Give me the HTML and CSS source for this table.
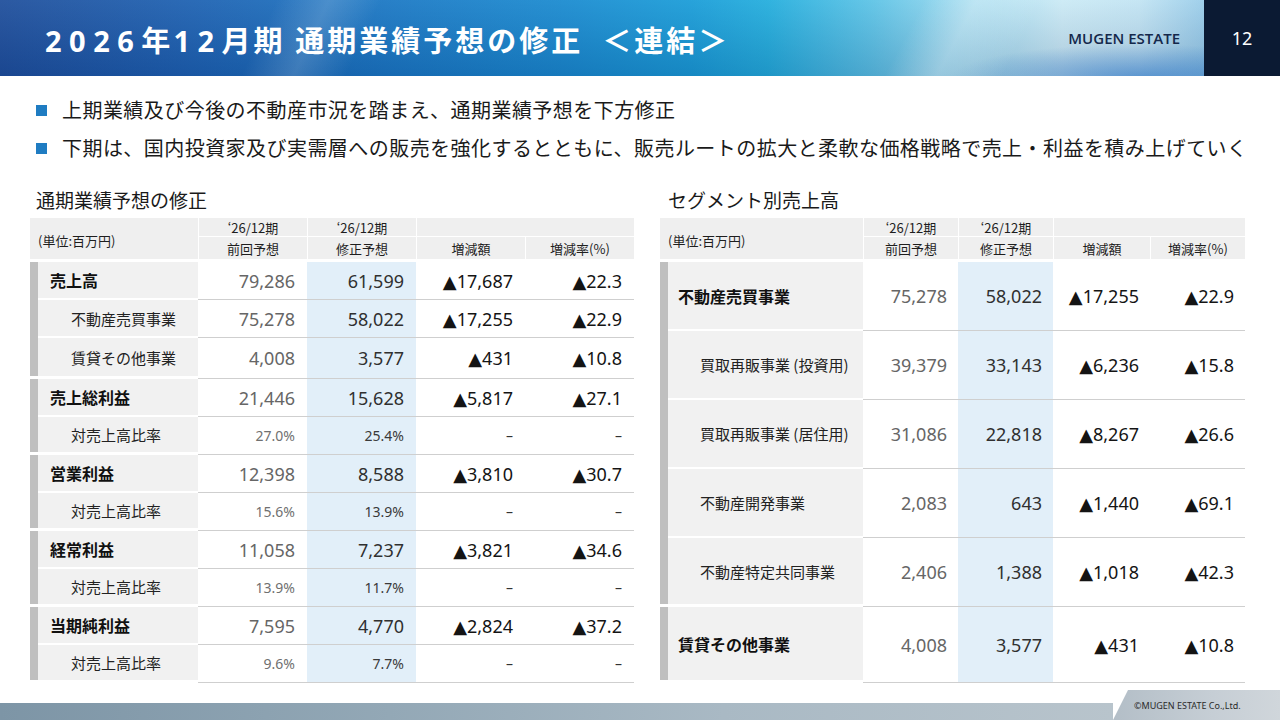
FILE: index.html
```html
<!DOCTYPE html>
<html lang="ja">
<head>
<meta charset="utf-8">
<title>2026年12月期 通期業績予想の修正</title>
<link rel="stylesheet" href="styles.css">
</head>
<body>
<div class="slide">
  <header class="hdr">
    <h1 class="title"><span class="d">2026</span>年<span class="d">12</span>月期 通期業績予想の修正&nbsp;&nbsp;＜連結＞</h1>
    <div class="logo">MUGEN ESTATE</div>
    <div class="pgno">12</div>
  </header>

  <ul class="bullets">
    <li>上期業績及び今後の不動産市況を踏まえ、通期業績予想を下方修正</li>
    <li>下期は、国内投資家及び実需層への販売を強化するとともに、販売ルートの拡大と柔軟な価格戦略で売上・利益を積み上げていく</li>
  </ul>

  <main class="tables">
    <section class="panel panel-left">
      <h2 class="sec">通期業績予想の修正</h2>
      <div class="thead tl">
        <div class="th unit">(単位:百万円)</div>
        <div class="th r1">‘26/12期</div>
        <div class="th r1">‘26/12期</div>
        <div class="th r1 blank"></div>
        <div class="th">前回予想</div>
        <div class="th">修正予想</div>
        <div class="th">増減額</div>
        <div class="th">増減率(%)</div>
      </div>
      <div class="tbody tl rows-l">
        <div class="lab">売上高</div>
        <div class="c n1">79,286</div><div class="c n2">61,599</div><div class="c n3">▲17,687</div><div class="c n4">▲22.3</div>

        <div class="lab sub">不動産売買事業</div>
        <div class="c n1">75,278</div><div class="c n2">58,022</div><div class="c n3">▲17,255</div><div class="c n4">▲22.9</div>

        <div class="lab sub end">賃貸その他事業</div>
        <div class="c n1">4,008</div><div class="c n2">3,577</div><div class="c n3">▲431</div><div class="c n4">▲10.8</div>

        <div class="lab">売上総利益</div>
        <div class="c n1">21,446</div><div class="c n2">15,628</div><div class="c n3">▲5,817</div><div class="c n4">▲27.1</div>

        <div class="lab sub end">対売上高比率</div>
        <div class="c n1 p">27.0%</div><div class="c n2 p">25.4%</div><div class="c n3 p">–</div><div class="c n4 p">–</div>

        <div class="lab">営業利益</div>
        <div class="c n1">12,398</div><div class="c n2">8,588</div><div class="c n3">▲3,810</div><div class="c n4">▲30.7</div>

        <div class="lab sub end">対売上高比率</div>
        <div class="c n1 p">15.6%</div><div class="c n2 p">13.9%</div><div class="c n3 p">–</div><div class="c n4 p">–</div>

        <div class="lab">経常利益</div>
        <div class="c n1">11,058</div><div class="c n2">7,237</div><div class="c n3">▲3,821</div><div class="c n4">▲34.6</div>

        <div class="lab sub end">対売上高比率</div>
        <div class="c n1 p">13.9%</div><div class="c n2 p">11.7%</div><div class="c n3 p">–</div><div class="c n4 p">–</div>

        <div class="lab">当期純利益</div>
        <div class="c n1">7,595</div><div class="c n2">4,770</div><div class="c n3">▲2,824</div><div class="c n4">▲37.2</div>

        <div class="lab sub end">対売上高比率</div>
        <div class="c n1 p">9.6%</div><div class="c n2 p">7.7%</div><div class="c n3 p">–</div><div class="c n4 p">–</div>
      </div>
    </section>

    <section class="panel panel-right">
      <h2 class="sec">セグメント別売上高</h2>
      <div class="thead tr">
        <div class="th unit">(単位:百万円)</div>
        <div class="th r1">‘26/12期</div>
        <div class="th r1">‘26/12期</div>
        <div class="th r1 blank"></div>
        <div class="th">前回予想</div>
        <div class="th">修正予想</div>
        <div class="th">増減額</div>
        <div class="th">増減率(%)</div>
      </div>
      <div class="tbody tr rows-r">
        <div class="lab">不動産売買事業</div>
        <div class="c n1">75,278</div><div class="c n2">58,022</div><div class="c n3">▲17,255</div><div class="c n4">▲22.9</div>

        <div class="lab sub">買取再販事業 (投資用)</div>
        <div class="c n1">39,379</div><div class="c n2">33,143</div><div class="c n3">▲6,236</div><div class="c n4">▲15.8</div>

        <div class="lab sub">買取再販事業 (居住用)</div>
        <div class="c n1">31,086</div><div class="c n2">22,818</div><div class="c n3">▲8,267</div><div class="c n4">▲26.6</div>

        <div class="lab sub">不動産開発事業</div>
        <div class="c n1">2,083</div><div class="c n2">643</div><div class="c n3">▲1,440</div><div class="c n4">▲69.1</div>

        <div class="lab sub end">不動産特定共同事業</div>
        <div class="c n1">2,406</div><div class="c n2">1,388</div><div class="c n3">▲1,018</div><div class="c n4">▲42.3</div>

        <div class="lab end">賃貸その他事業</div>
        <div class="c n1">4,008</div><div class="c n2">3,577</div><div class="c n3">▲431</div><div class="c n4">▲10.8</div>
      </div>
    </section>
  </main>

  <footer class="ftr">
    <div class="band"></div>
    <div class="tab">©MUGEN ESTATE Co.,Ltd.</div>
  </footer>
</div>
</body>
</html>
```

FILE: styles.css
```css
* {
  box-sizing: border-box;
  margin: 0;
  padding: 0;
}

body {
  margin: 0;
  background: #ffffff;
  font-family: "Noto Sans CJK JP", "Noto Sans", sans-serif;
  color: #1a1a1a;
}

.slide {
  width: 1280px;
  height: 720px;
  display: flex;
  flex-direction: column;
  overflow: hidden;
  background: #ffffff;
}

/* ---------- header ---------- */
.hdr {
  flex: none;
  height: 76px;
  display: flex;
  align-items: center;
  background:
    linear-gradient(115deg, rgba(255,255,255,0) 0%, rgba(255,255,255,0) 21%, rgba(255,255,255,0.16) 25%, rgba(255,255,255,0) 29%),
    linear-gradient(118deg, rgba(255,255,255,0) 0%, rgba(255,255,255,0) 70%, rgba(255,255,255,0.25) 74%, rgba(255,255,255,0) 79%),
    radial-gradient(ellipse 190px 34px at 1140px 78px, rgba(30,110,200,0.55), rgba(30,110,200,0)),
    linear-gradient(180deg, rgba(255,255,255,0.06), rgba(0,25,80,0.16)),
    linear-gradient(90deg, #1f4f9c 0%, #1e62b2 15%, #1b78c4 30%, #1a8bd0 44%, #1a9dd8 54%, #24aedd 60%, #5cc3e6 68%, #a2dbef 76%, #cbeaf5 83%, #c2e4f3 89%, #93c9e8 95%, #7cbce3 100%);
}

.title {
  padding-left: 45px;
  margin-top: 4px;
  font-size: 29px;
  font-weight: 700;
  line-height: 1;
  letter-spacing: 3px;
  color: #ffffff;
  white-space: nowrap;
}

.title .d {
  font-family: "Noto Sans", "Noto Sans CJK JP", sans-serif;
  letter-spacing: 7.5px;
}

.logo {
  margin-left: auto;
  margin-right: 24px;
  font-family: "Open Sans", "Noto Sans", sans-serif;
  font-weight: 600;
  font-size: 15px;
  color: #14284b;
  white-space: nowrap;
}

.pgno {
  flex: none;
  width: 76px;
  height: 76px;
  display: flex;
  align-items: center;
  justify-content: center;
  background: #0b1a33;
  color: #ffffff;
  font-family: "Noto Sans", sans-serif;
  font-size: 18px;
}

/* ---------- bullets ---------- */
.bullets {
  flex: none;
  list-style: none;
  padding: 15px 0 0 36px;
}

.bullets li {
  display: flex;
  align-items: center;
  height: 38px;
  line-height: 38px;
  font-size: 20px;
  letter-spacing: 0.45px;
  color: #1a1a1a;
  white-space: nowrap;
}

.bullets li::before {
  content: "";
  flex: none;
  width: 11px;
  height: 11px;
  margin-right: 15px;
  background: #1f7cc2;
}

/* ---------- tables ---------- */
.tables {
  flex: none;
  display: flex;
  gap: 26px;
  padding: 21px 0 0 30px;
}

.panel-left { width: 604px; }
.panel-right { width: 585px; }

.sec {
  height: 24px;
  margin-bottom: 6px;
  padding-left: 6px;
  font-size: 19px;
  font-weight: 400;
  line-height: 24px;
  color: #1a1a1a;
}

.panel-right .sec { padding-left: 8px; }

.thead,
.tbody {
  display: grid;
}

.tl { grid-template-columns: 168px 109px 109px 109px 109px; }
.tr { grid-template-columns: 203px 95px 95px 97px 95px; }

.thead {
  grid-template-rows: 19px 22px;
}

.th {
  display: flex;
  align-items: center;
  justify-content: center;
  background: #efefef;
  border-left: 1px solid #ffffff;
  font-size: 13px;
  color: #1e1e1e;
  white-space: nowrap;
}

.th.r1 {
  border-bottom: 1px solid #ffffff;
  font-size: 13px;
}

.th.unit {
  grid-row: 1 / 3;
  justify-content: flex-start;
  padding: 4px 0 0 8px;
  border-left: 0;
  font-size: 13px;
}

.th.blank {
  grid-column: 4 / 6;
}

.tbody {
  margin-top: 3px;
}

.rows-l { grid-template-rows: 38px 38px 41px repeat(8, 38px); }
.rows-r { grid-template-rows: 69px 69px 69px 69px 69px 76px; }

.lab {
  display: flex;
  align-items: center;
  padding: 0 0 2px 20px;
  font-size: 16px;
  font-weight: 700;
  color: #111111;
  white-space: nowrap;
  background:
    linear-gradient(#bfbfbf, #bfbfbf) left top / 8px 100% no-repeat,
    linear-gradient(#f1f1f1, #f1f1f1) left top / 100% calc(100% - 2px) no-repeat;
}

.lab.sub {
  padding-left: 41px;
  font-size: 15px;
  font-weight: 400;
  color: #222222;
}

.lab.end {
  padding-bottom: 3px;
  background-size: 8px calc(100% - 3px), 100% calc(100% - 3px);
}

.tr .lab { padding-left: 18px; }
.tr .lab.sub { padding-left: 40px; }

.c {
  display: flex;
  align-items: center;
  justify-content: flex-end;
  padding-right: 12px;
  border-bottom: 1px solid #cfcfcf;
  font-family: "Noto Sans", "DejaVu Sans", "Noto Sans CJK JP", sans-serif;
  font-size: 18px;
  white-space: nowrap;
}

.tr .c { padding-right: 11px; }

.n1 { color: #666666; }
.n2 { color: #303030; background: #e2eff9; }
.n3, .n4 { color: #141414; }

.c.p {
  font-size: 14px;
}

.n1.p { color: #707070; }
.n2.p { color: #3a3a3a; }
.n3.p, .n4.p { color: #333333; }

/* ---------- footer ---------- */
.ftr {
  margin-top: auto;
  flex: none;
  height: 30px;
  display: flex;
  align-items: flex-end;
}

.band {
  flex: 1;
  height: 17px;
  background: linear-gradient(90deg, #7d95a6 0%, #93a8b6 35%, #a9b9c4 65%, #b8c4cc 100%);
}

.tab {
  flex: none;
  width: 167px;
  height: 30px;
  display: flex;
  align-items: center;
  padding-left: 21px;
  clip-path: polygon(15px 0, 100% 0, 100% 100%, 0 100%);
  background: linear-gradient(90deg, #b3bec7 0%, #c6ced5 60%, #d0d6db 100%);
  font-family: "Noto Sans", sans-serif;
  font-size: 9px;
  color: #2a2a2a;
  white-space: nowrap;
}
```
